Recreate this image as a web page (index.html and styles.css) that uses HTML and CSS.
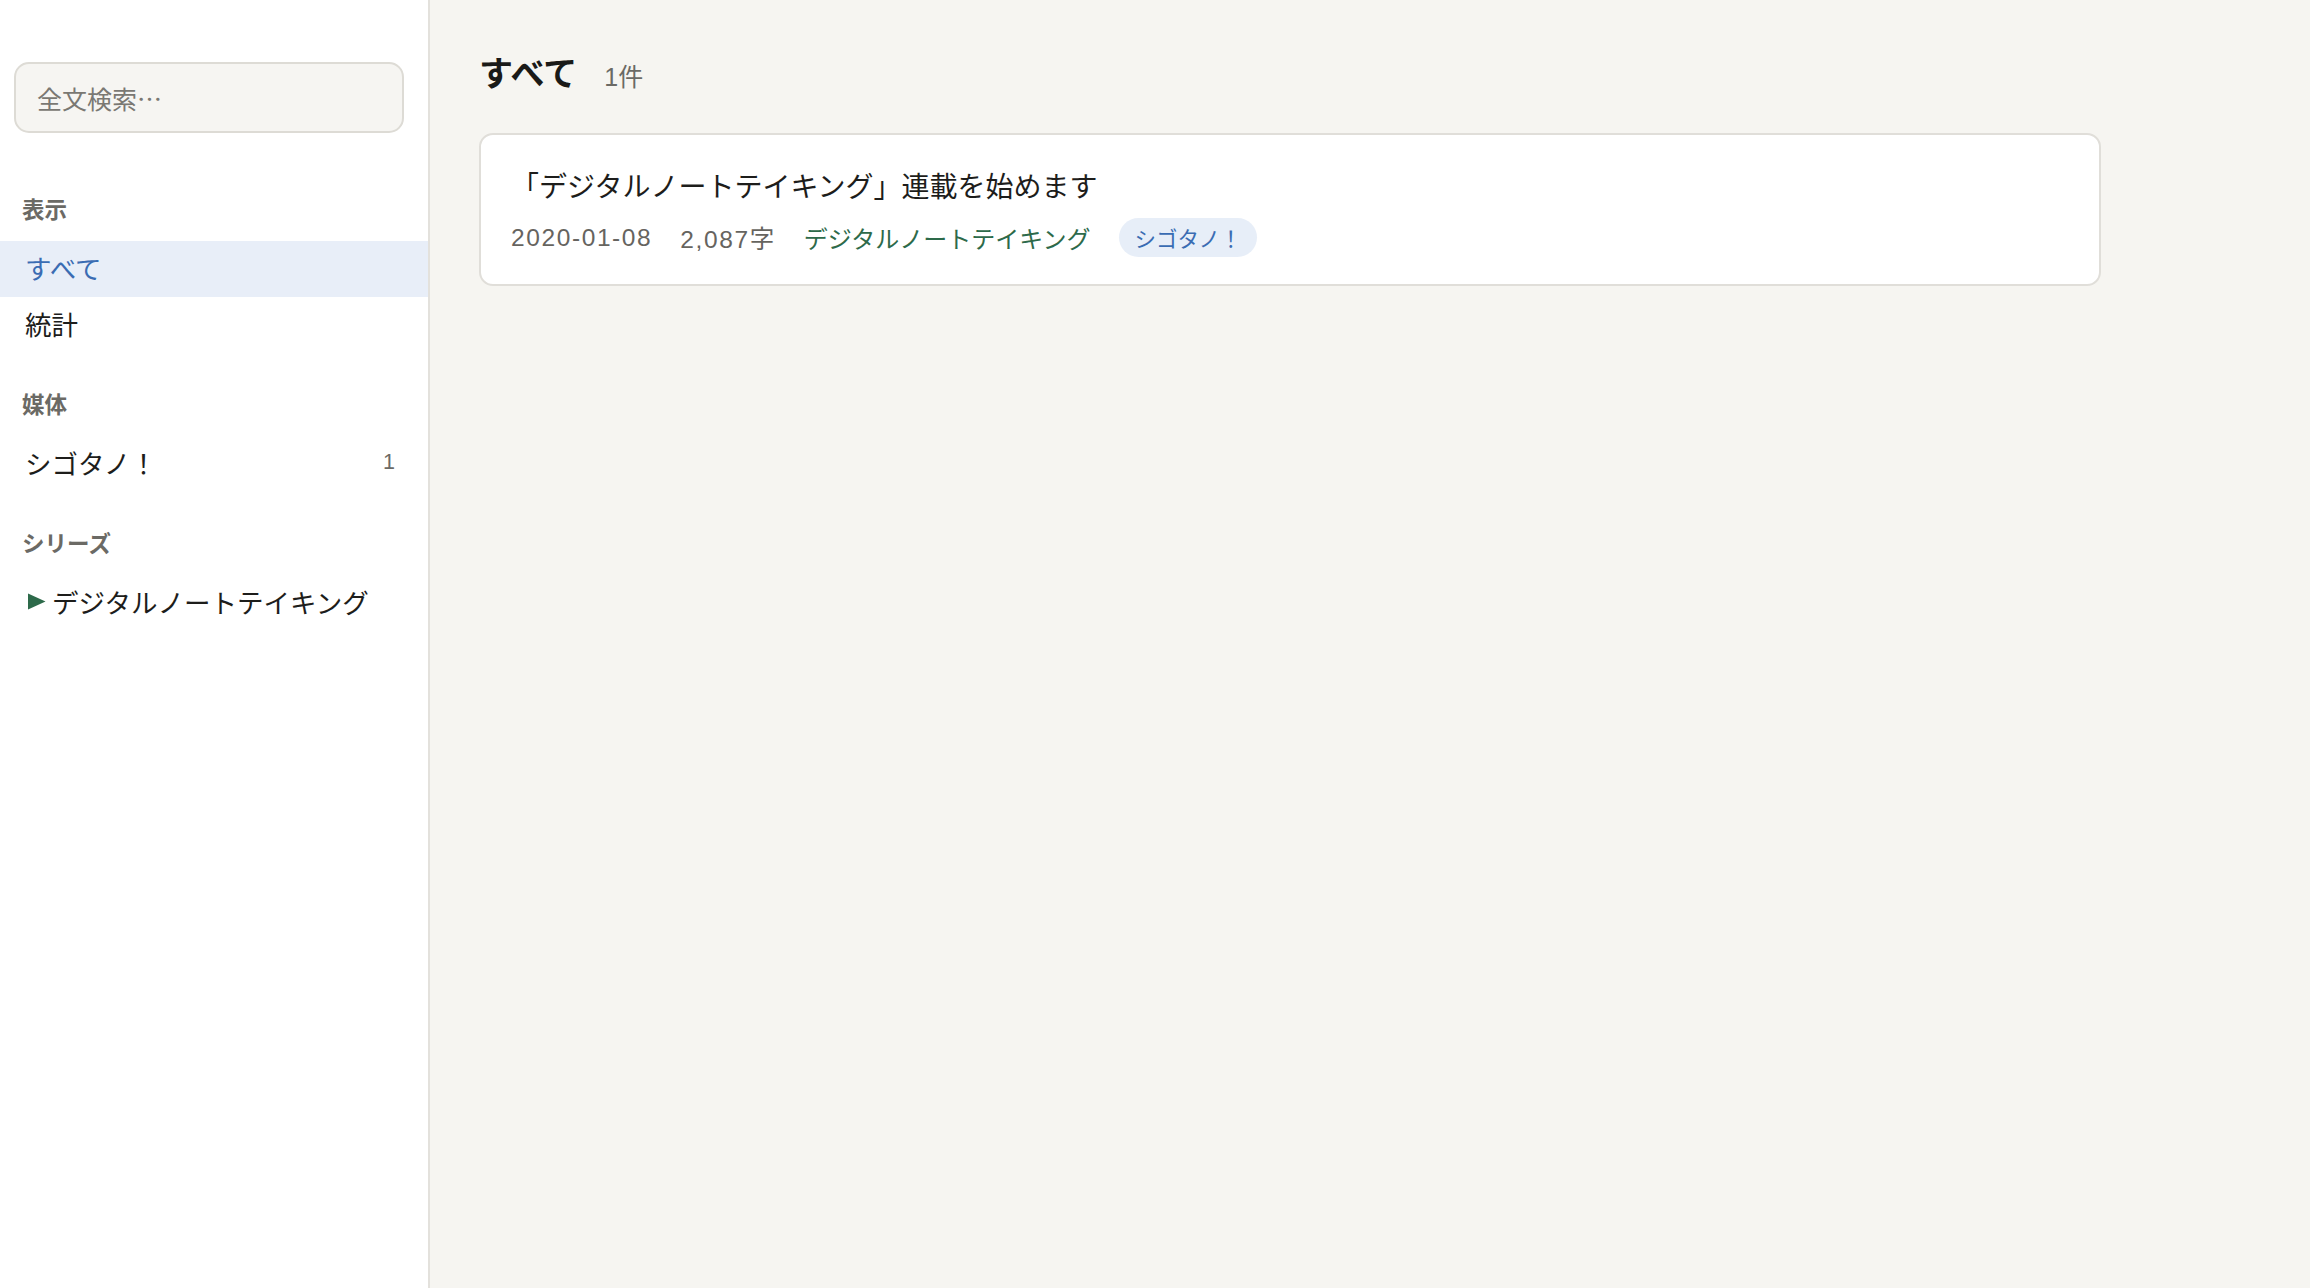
FILE: index.html
```html
<!DOCTYPE html>
<html lang="ja">
<head>
<meta charset="utf-8">
<title>すべて</title>
<link rel="stylesheet" href="styles.css">
</head>
<body>
<div class="app">
  <aside class="sidebar">
    <input class="search" type="text" placeholder="全文検索…">

    <nav class="nav">
      <section class="nav-section">
        <h2 class="nav-label">表示</h2>
        <a class="nav-item is-active" href="#">すべて</a>
        <a class="nav-item" href="#">統計</a>
      </section>

      <section class="nav-section">
        <h2 class="nav-label">媒体</h2>
        <a class="nav-item" href="#"><span>シゴタノ！</span><span class="nav-count">1</span></a>
      </section>

      <section class="nav-section">
        <h2 class="nav-label">シリーズ</h2>
        <a class="nav-item nav-series" href="#">
          <svg class="caret" viewBox="0 0 19 17" width="19" height="17" aria-hidden="true"><polygon points="1,0.5 18.5,8.5 1,16.5"/></svg>
          <span>デジタルノートテイキング</span>
        </a>
      </section>
    </nav>
  </aside>

  <main class="main">
    <header class="page-head">
      <h1 class="page-title">すべて</h1>
      <span class="page-count">1件</span>
    </header>

    <article class="card">
      <h3 class="card-title">「デジタルノートテイキング」連載を始めます</h3>
      <div class="card-meta">
        <span class="meta-num">2020-01-08</span>
        <span class="meta-num">2,087字</span>
        <a class="meta-series" href="#">デジタルノートテイキング</a>
        <span class="pill">シゴタノ！</span>
      </div>
    </article>
  </main>
</div>
</body>
</html>
```

FILE: styles.css
```css
* {
  box-sizing: border-box;
}

html, body {
  margin: 0;
  height: 100%;
}

body {
  font-family: "Noto Sans CJK JP", "Noto Sans", sans-serif;
  color: #1d1d1b;
  background: #f6f5f1;
}

a {
  color: inherit;
  text-decoration: none;
}

.app {
  display: flex;
  min-height: 100vh;
}

/* ---- sidebar ---- */
.sidebar {
  width: 430px;
  flex: 0 0 430px;
  background: #ffffff;
  border-right: 2px solid #e3e1dc;
  padding-top: 62px;
}

.search {
  display: block;
  width: 390px;
  height: 71px;
  margin-left: 14px;
  padding: 0 21px;
  border: 2px solid #dddbd5;
  border-radius: 15px;
  background: #f6f5f2;
  font-family: inherit;
  font-size: 25px;
  color: #1d1d1b;
  outline: none;
}

.search::placeholder {
  color: #7a7873;
}

.nav-section {
  display: flex;
  flex-direction: column;
}

.nav-label {
  margin: 35px 0 15px;
  padding: 0 0 3px 22px;
  font-size: 22.5px;
  line-height: 30px;
  font-weight: 700;
  color: #6b6a65;
}

.nav-section:first-child .nav-label {
  margin-top: 60px;
}

.nav-item {
  display: flex;
  align-items: center;
  justify-content: space-between;
  height: 56px;
  padding: 0 33px 3px 25px;
  font-size: 26.5px;
  color: #1d1d1b;
}

.nav-item.is-active {
  background: #e8eef8;
  color: #3a6cb3;
}

.nav-count {
  font-family: "Liberation Sans", "Noto Sans CJK JP", sans-serif;
  font-size: 21.5px;
  color: #6b6a65;
}

.nav-series {
  justify-content: flex-start;
  gap: 6px;
  padding-left: 27px;
}

.caret {
  fill: #2d6a4a;
  flex: none;
}

/* ---- main ---- */
.main {
  flex: 1;
  padding: 50px 49px;
}

.page-head {
  display: flex;
  align-items: baseline;
  gap: 27px;
  height: 44px;
  margin-bottom: 39px;
}

.page-title {
  margin: 0;
  font-size: 34px;
  line-height: 44px;
  font-weight: 700;
  color: #1a1a18;
}

.page-count {
  font-family: "Liberation Sans", "Noto Sans CJK JP", sans-serif;
  font-size: 25px;
  color: #6b6a65;
}

.card {
  max-width: 1622px;
  padding: 30px 30px 27px;
  background: #ffffff;
  border: 2px solid #e0ded9;
  border-radius: 14px;
}

.card-title {
  margin: 0 0 13px;
  font-size: 28px;
  line-height: 40px;
  font-weight: 400;
  color: #1d1d1b;
}

.card-meta {
  display: flex;
  align-items: center;
  gap: 28px;
  height: 39px;
  font-size: 24px;
  color: #66645f;
}

.meta-num {
  font-family: "Liberation Sans", "Noto Sans CJK JP", sans-serif;
  font-size: 24.5px;
  letter-spacing: 1.6px;
}

.meta-series {
  color: #2d6a4a;
}

.pill {
  display: inline-flex;
  align-items: center;
  height: 39px;
  padding: 0 16px;
  border-radius: 20px;
  background: #e7eef8;
  color: #3a6cb3;
  font-size: 21.5px;
}
```
